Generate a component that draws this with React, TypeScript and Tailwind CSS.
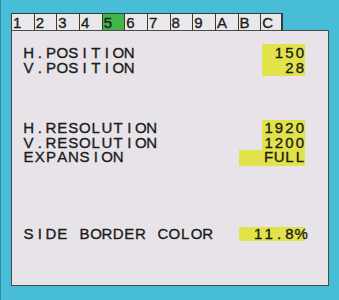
const TABS = ["1", "2", "3", "4", "5", "6", "7", "8", "9", "A", "B", "C"];

// the OSD font is a fixed-cell bitmap font, so every glyph sits in its own cell
function Cells({ text, cell }: { text: string; cell: "label" | "value" }) {
  return (
    <>
      {text.split("").map((ch, i) => (
        <span
          key={i}
          className={
            cell === "label"
              ? "inline-block w-[11.2px] text-center"
              : "inline-block w-[10.4px] text-center"
          }
        >
          {ch === " " ? "\u00a0" : ch}
        </span>
      ))}
    </>
  );
}

function Tab({ label, active, last }: { label: string; active: boolean; last: boolean }) {
  return (
    <div
      className={`h-[17px] w-[22.67px] border-t border-l border-[#3a3a3a] pl-[1px] text-[15px] leading-[18px] text-[#1c1c1c] ${
        active ? "bg-[#3fb54a]" : "bg-[#ebe8ec]"
      } ${last ? "border-r-2" : ""}`}
    >
      {label}
    </div>
  );
}

export default function App() {
  return (
    <div
      className="h-[300px] w-[339px] border-l border-[#2f8ea5] bg-[#47bdd7] pt-[13px] pl-[10px] text-[#1c1c1c] [-webkit-text-stroke:0.35px_#1c1c1c]"
      style={{ fontFamily: '"Liberation Sans", Arial, sans-serif' }}
    >
      <div className="flex">
        {TABS.map((t, i) => (
          <Tab key={t} label={t} active={t === "5"} last={i === TABS.length - 1} />
        ))}
      </div>

      <div className="flex h-[256px] w-[318px] flex-col border border-[#4a4a4a] bg-[#e7e3e8] pl-[11px] pr-[23px] text-[15px]">
        {/* position */}
        <div className="mt-[13px] flex justify-between">
          <div className="py-[1px] leading-[15px]">
            <div><Cells text="H.POSITION" cell="label" /></div>
            <div><Cells text="V.POSITION" cell="label" /></div>
          </div>
          <div className="w-[43px] bg-[#e2e24a] py-[1px] text-right leading-[15px]">
            <div><Cells text="150" cell="value" /></div>
            <div><Cells text="28" cell="value" /></div>
          </div>
        </div>

        {/* resolution */}
        <div className="mt-[44px] flex justify-between">
          <div className="pt-[1px] leading-[14.5px]">
            <div><Cells text="H.RESOLUTION" cell="label" /></div>
            <div><Cells text="V.RESOLUTION" cell="label" /></div>
            <div><Cells text="EXPANSION" cell="label" /></div>
          </div>
          <div className="flex w-[66px] flex-col items-end leading-[14.5px]">
            <div className="w-[43px] bg-[#e2e24a] pt-[1px] text-right"><Cells text="1920" cell="value" /></div>
            <div className="w-[43px] bg-[#e2e24a] text-right"><Cells text="1200" cell="value" /></div>
            <div className="w-[66px] bg-[#e2e24a] pb-[1px] text-right"><Cells text="FULL" cell="value" /></div>
          </div>
        </div>

        {/* side border */}
        <div className="mt-[61px] flex justify-between leading-[14px]">
          <div><Cells text="SIDE BORDER COLOR" cell="label" /></div>
          <div className="h-[14px] w-[66px] bg-[#e2e24a] text-right"><Cells text="11.8%" cell="value" /></div>
        </div>
      </div>
    </div>
  );
}
